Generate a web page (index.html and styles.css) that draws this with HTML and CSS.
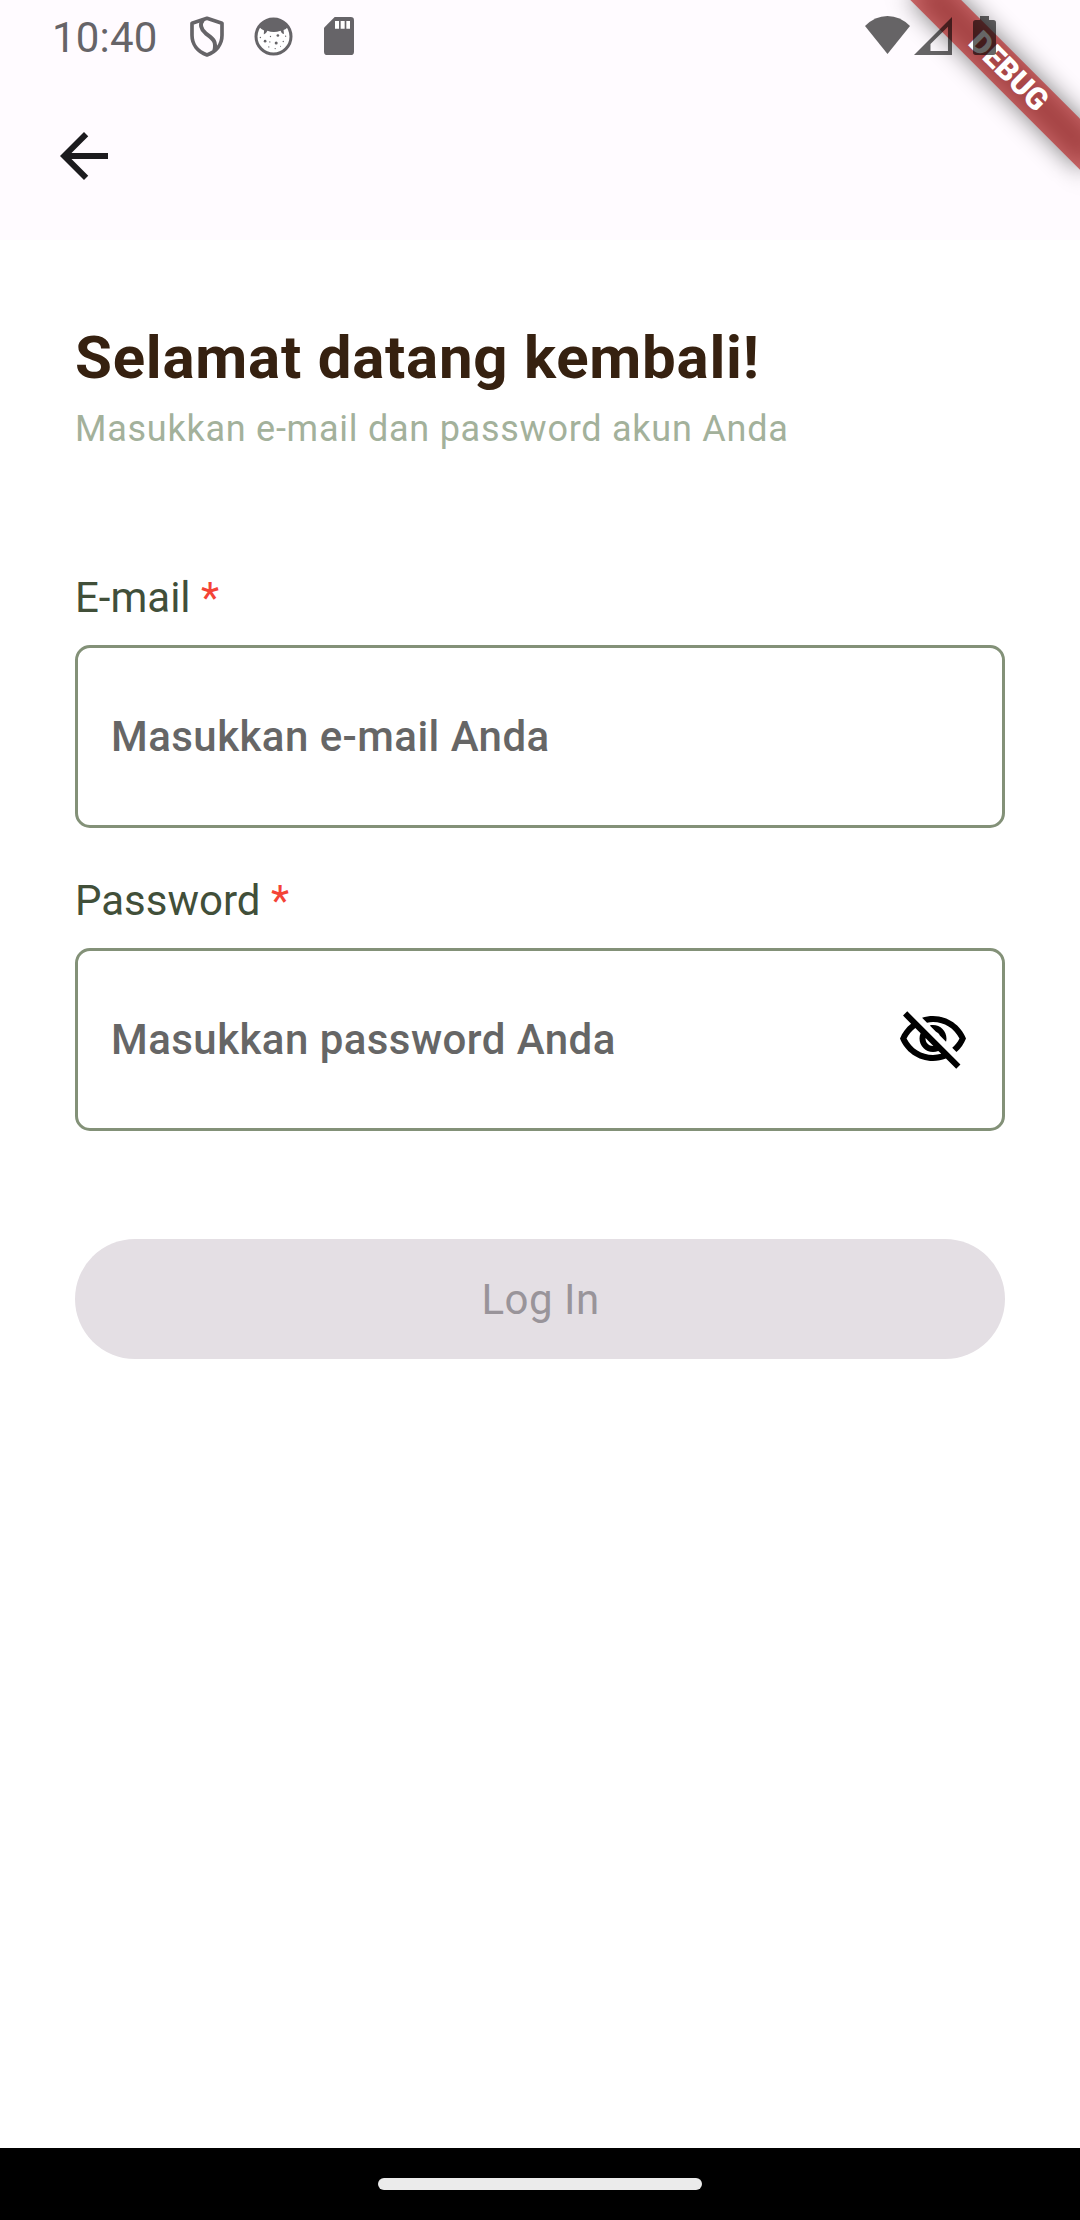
FILE: index.html
```html
<!DOCTYPE html>
<html lang="id">
<head>
<meta charset="utf-8">
<title>Log In</title>
<link rel="stylesheet" href="styles.css">
</head>
<body>
<div class="screen">
  <header class="top">
    <div class="status">
      <div class="status-left">
        <span class="clock">10:40</span>
        <svg class="shield" viewBox="450 46 102 123"><path d="M501 53L546 68V104C546 131 529 153 501 163C473 153 456 131 456 104V68Z" fill="none" stroke="currentColor" stroke-width="11" stroke-linejoin="round"/><path d="M489 58C479 70 482 85 497 98C516 113 531 119 523 150" fill="none" stroke="currentColor" stroke-width="12"/></svg>
        <svg class="face" viewBox="641 50 116 116"><circle cx="699" cy="108" r="52" fill="#fff" stroke="currentColor" stroke-width="9"/><path d="M655 78Q672 54 699 54T743 78Q735 88 729 89L730 100Q724 102 720 91Q699 98 681 91Q676 102 670 101L671 90Q662 86 655 78Z" fill="currentColor"/><g fill="currentColor"><circle cx="674" cy="122" r="4"/><circle cx="707" cy="127" r="4.5"/><circle cx="712" cy="105" r="4"/><circle cx="690" cy="108" r="2"/><circle cx="685" cy="139" r="2"/><circle cx="704" cy="144" r="2"/><circle cx="728" cy="123" r="2"/><circle cx="735" cy="107" r="2"/><circle cx="660" cy="111" r="2"/><circle cx="688" cy="124" r="2"/><circle cx="720" cy="137" r="1.5"/></g></svg>
        <svg class="card" viewBox="852 51 90 114"><path d="M884 51H932Q942 51 942 61V155Q942 165 932 165H862Q852 165 852 155V83Z" fill="currentColor"/><path d="M885 63h12v23h-12zM902 63h12v23h-12zM919 63h11v23h-11z" fill="#fff"/></svg>
      </div>
      <div class="status-right">
        <svg class="wifi" viewBox="76 49 134 113"><path d="M143 162L76 79Q105 49 143 49T210 79Z" fill="currentColor"/></svg>
        <svg class="signal" viewBox="222 50 113 113"><path d="M222 163L335 50V163ZM271 151H323V79L271 130Z" fill="currentColor" fill-rule="evenodd"/></svg>
        <svg class="battery" viewBox="399 48 69 117"><path d="M420 48H447V60H460Q468 60 468 68V157Q468 165 460 165H407Q399 165 399 157V68Q399 60 407 60H420Z" fill="currentColor"/></svg>
      </div>
    </div>
    <div class="appbar">
      <svg class="icon" viewBox="0 0 24 24"><path d="M20 11H7.83l5.59-5.59L12 4l-8 8 8 8 1.41-1.41L7.83 13H20v-2z" fill="currentColor"/></svg>
    </div>
    <div class="ribbon"><span>DEBUG</span></div>
  </header>
  <main class="content">
    <h1 class="title">Selamat datang kembali!</h1>
    <p class="subtitle">Masukkan e-mail dan password akun Anda</p>
    <form class="form">
      <div class="label">E-mail <span class="req">*</span></div>
      <div class="field"><span>Masukkan e-mail Anda</span></div>
      <div class="label">Password <span class="req">*</span></div>
      <div class="field"><span>Masukkan password Anda</span>
        <svg class="icon" viewBox="0 0 24 24"><path d="M12 6c3.79 0 7.17 2.13 8.82 5.5-.59 1.22-1.42 2.27-2.41 3.12l1.41 1.41c1.39-1.23 2.49-2.77 3.18-4.53C21.27 7.11 17 4 12 4c-1.27 0-2.49.2-3.64.57l1.65 1.65C10.66 6.09 11.32 6 12 6zm-1.07 1.14L13 9.21c.57.25 1.03.71 1.28 1.28l2.07 2.07c.08-.34.14-.7.14-1.07C16.5 9.01 14.48 7 12 7c-.37 0-.72.05-1.07.14zM2.01 3.87l2.68 2.68C3.06 7.83 1.77 9.53 1 11.5 2.73 15.89 7 19 12 19c1.52 0 2.98-.29 4.32-.82l3.42 3.42 1.41-1.41L3.42 2.45 2.01 3.87zm7.5 7.5l2.61 2.61c-.04.01-.08.02-.12.02-1.38 0-2.5-1.12-2.5-2.5 0-.05.01-.08.01-.13zm-3.4-3.4l1.75 1.75c-.23.55-.36 1.15-.36 1.78 0 2.48 2.02 4.5 4.5 4.5.63 0 1.23-.13 1.77-.36l.98.98c-.88.24-1.8.38-2.75.38-3.79 0-7.17-2.13-8.82-5.5.7-1.43 1.72-2.61 2.93-3.53z" fill="currentColor"/></svg>
      </div>
      <div class="submit">Log In</div>
    </form>
  </main>
  <footer class="navbar"><div class="pill"></div></footer>
</div>
</body>
</html>
```
FILE: styles.css
```css
* { box-sizing: border-box; }
body { margin: 0; font-family: Roboto, sans-serif; background: #fff; }
svg { display: block; flex: none; }
.screen { width: 1080px; height: 2220px; display: flex; flex-direction: column; }
.top { position: relative; overflow: hidden; height: 240px; flex: none; background: #fffbff; }
.status { position: relative; z-index: 2; display: flex; justify-content: space-between; height: 72px; padding: 16px 84px 0 52px; }
.status-left, .status-right { display: flex; align-items: flex-start; }
.status-left { color: #666468; }
/* translucent so the ribbon shows through */
.status-right { color: rgba(0,0,0,.6); }
.clock { font-size: 42px; line-height: 44px; width: 138px; letter-spacing: .2px; }
.shield { width: 34px; height: 41px; }
.face { width: 39px; height: 39px; margin: 1px 0 0 29.5px; }
.card { width: 30px; height: 38px; margin: 1px 0 0 31.5px; }
.wifi { width: 45px; height: 38px; }
.signal { width: 38px; height: 38px; margin: 1px 0 0 4px; }
.battery { width: 23px; height: 39px; margin-left: 21px; }
.appbar { height: 168px; display: flex; align-items: center; padding-left: 48px; color: #1c1b1e; }
.icon { width: 72px; height: 72px; }
.ribbon { position: absolute; z-index: 1; left: 960px; top: 84px; width: 240px; height: 36px; transform-origin: 120px -84px; transform: rotate(45deg); }
.ribbon::before, .ribbon::after { content: ""; position: absolute; inset: 0; }
.ribbon::before { background: rgba(0,0,0,.5); filter: blur(12px); }
.ribbon::after { background: rgba(183,28,28,.627); }
.ribbon span { position: relative; z-index: 1; display: block; text-align: center; color: #fff; font-weight: 900; font-size: 30.6px; line-height: 34px; }
.content { flex: 1; padding: 82px 75px 0; }
.title { margin: 0; font-size: 60px; line-height: 72px; font-weight: 700; color: #362110; letter-spacing: .75px; }
.subtitle { margin: 11px 0 0; font-size: 36px; line-height: 48px; color: #a3b19b; letter-spacing: .75px; }
.label { font-size: 42px; line-height: 60px; color: #414f39; margin-bottom: 17px; }
.form { padding-top: 115px; }
.req { color: #f44336; }
.field { display: flex; align-items: center; justify-content: space-between; height: 183px; border: 3px solid #839178; border-radius: 15px; padding: 0 33px; font-size: 42px; font-weight: 500; letter-spacing: .45px; color: #666; margin-bottom: 43px; }
.field .icon { color: #000; }
.submit { display: flex; align-items: center; justify-content: center; margin-top: 108px; height: 120px; padding-left: 1px; border-radius: 60px; background: #e4dfe4; color: #99949a; font-size: 42px; letter-spacing: .5px; }
.navbar { height: 72px; background: #000; display: flex; justify-content: center; padding-top: 30px; }
.pill { width: 324px; height: 12px; border-radius: 6px; background: #ebebeb; }
```
